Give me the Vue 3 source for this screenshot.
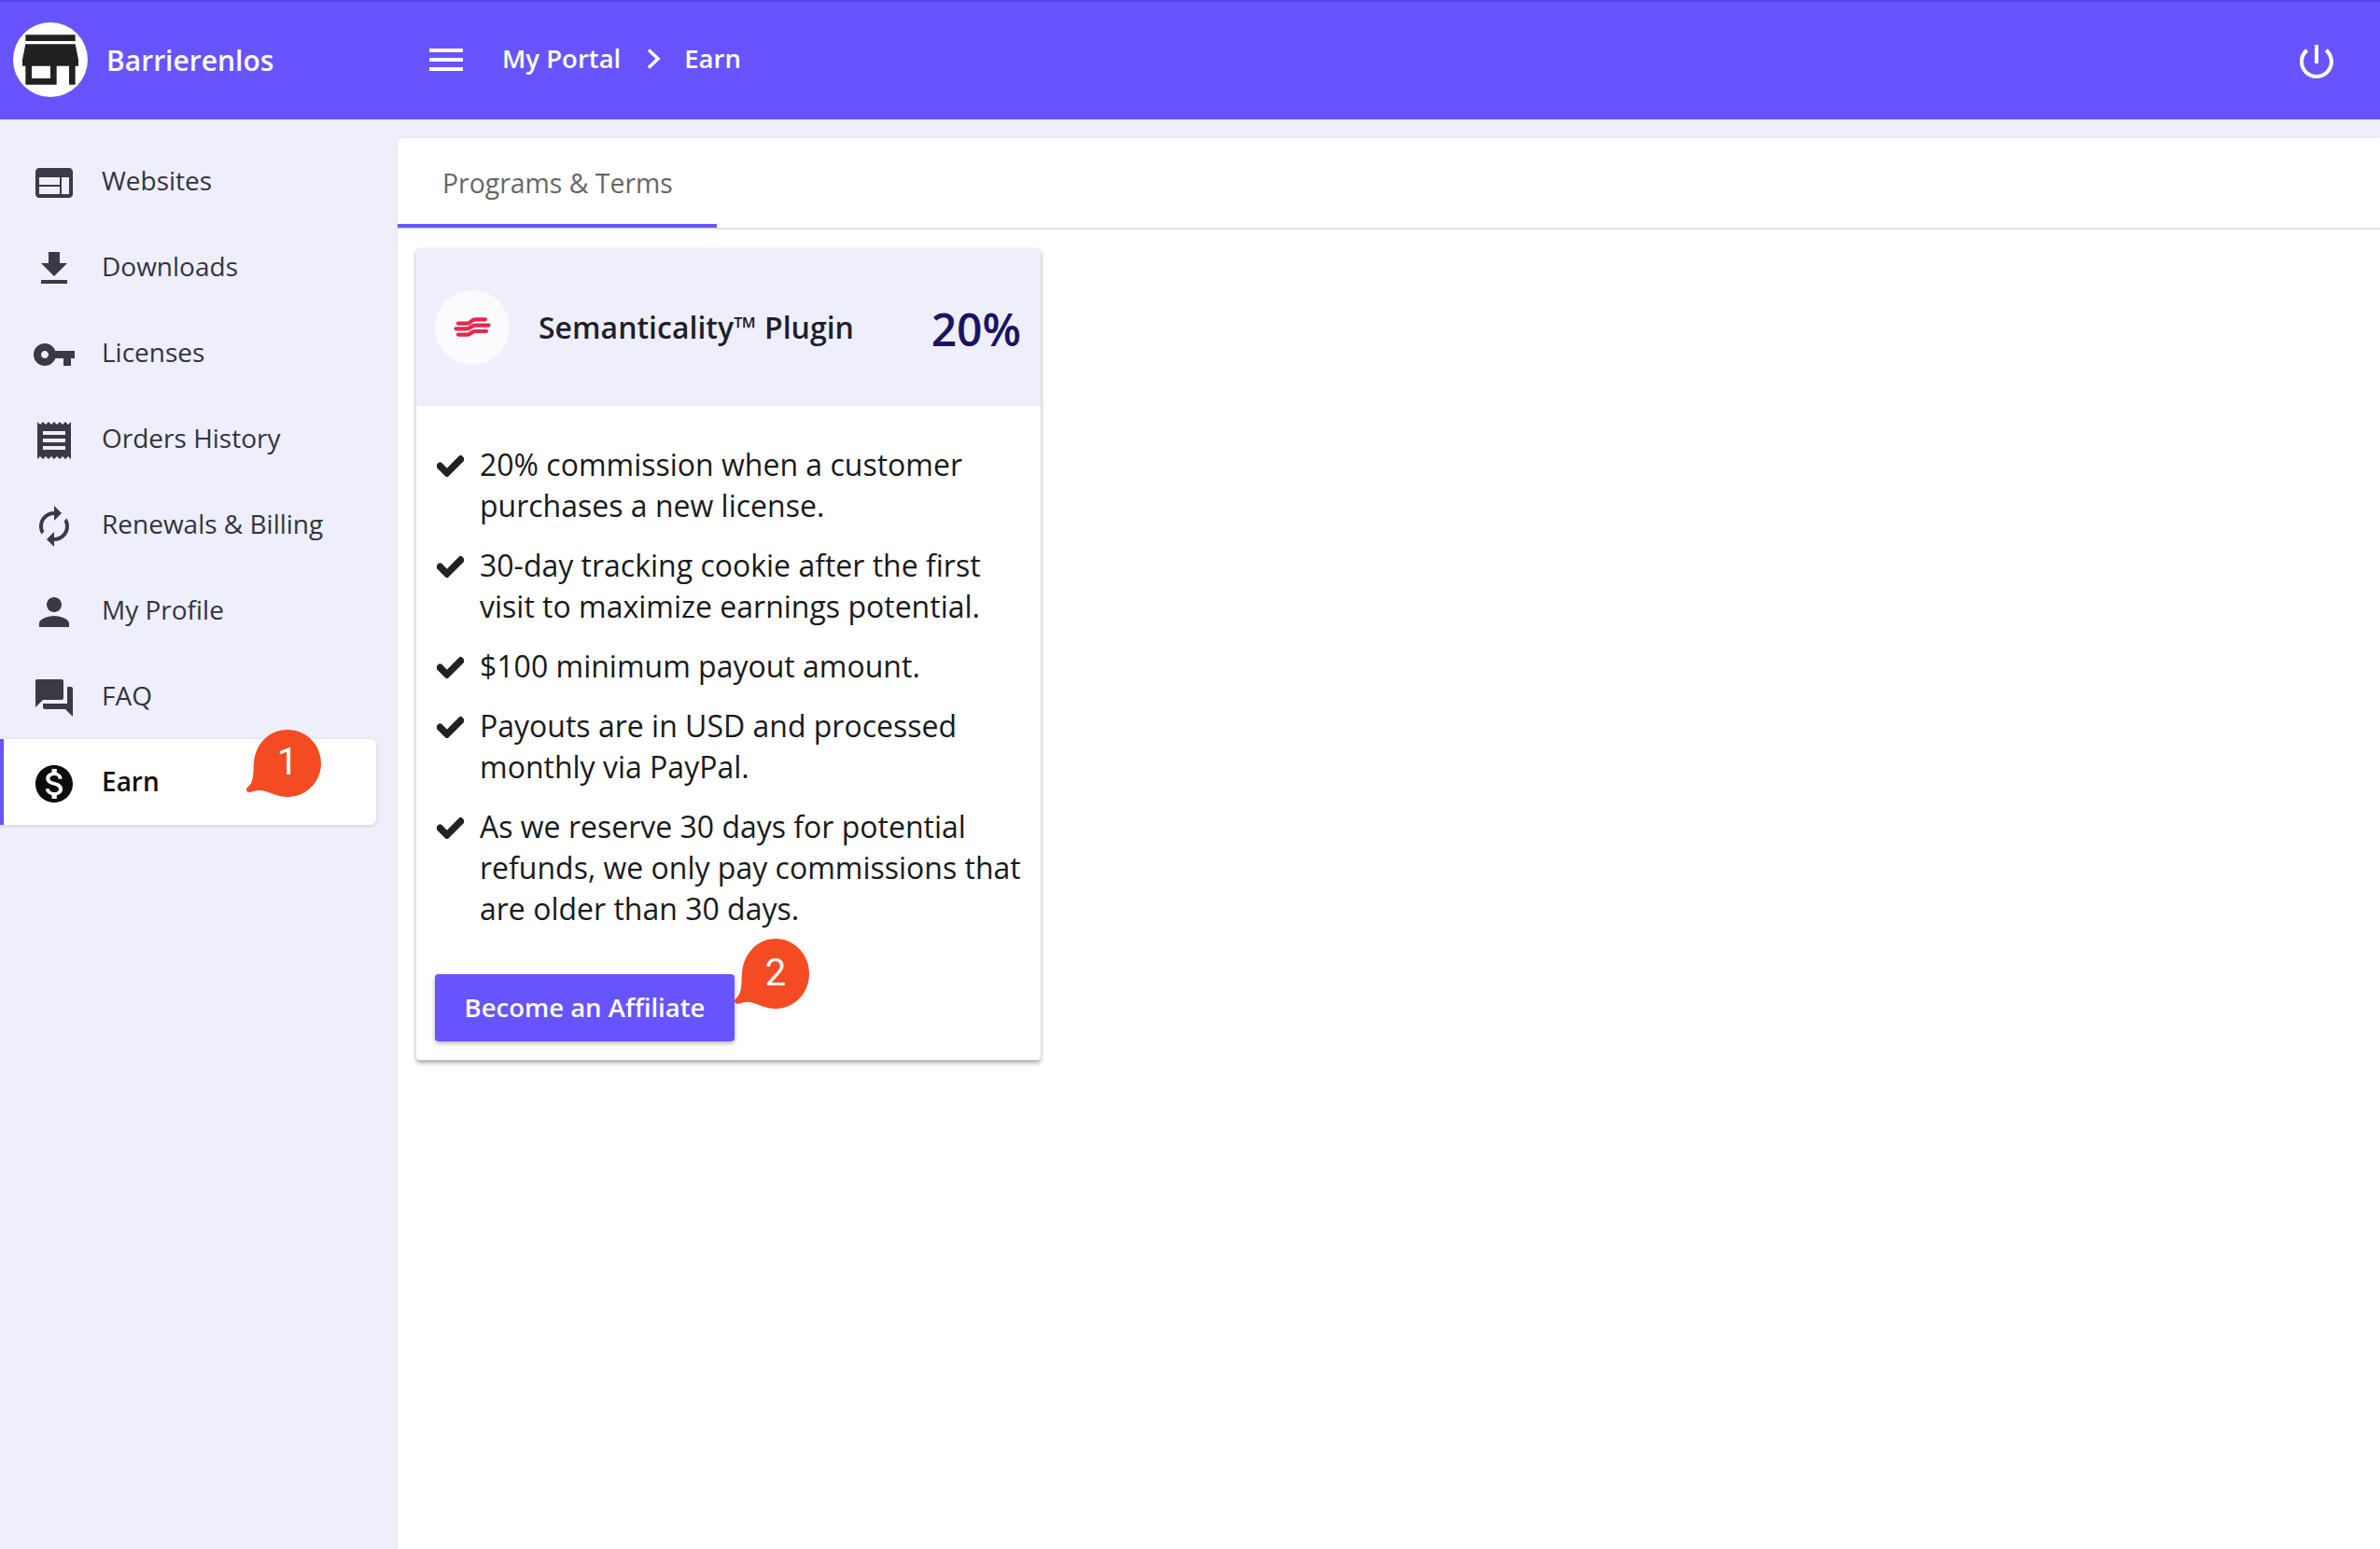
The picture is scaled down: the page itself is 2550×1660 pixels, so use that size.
<template>
  <div class="page">
    <header class="topbar">
      <div class="brand">
        <span class="brand-logo">
          <svg viewBox="0 0 24 24"><path :d="icons.store" /></svg>
        </span>
        <span class="brand-name">Barrierenlos</span>
      </div>
      <svg class="menu-icon" viewBox="0 0 24 24"><path :d="icons.menu" /></svg>
      <span class="crumb">My Portal</span>
      <svg class="crumb-arrow" viewBox="0 0 16 24"><path d="M3 2.500l10 9.500-10 9.500" /></svg>
      <span class="crumb">Earn</span>
      <svg class="power-icon" viewBox="0 0 24 24"><path :d="icons.power" /></svg>
    </header>

    <div class="body">
      <nav class="sidebar">
        <a
          v-for="item in menu"
          :key="item.label"
          class="nav-item"
          :class="{ active: item.active }"
        >
          <svg class="nav-icon" viewBox="0 0 24 24"><path :d="icons[item.icon]" /></svg>
          <span class="nav-label">{{ item.label }}</span>
          <span v-if="item.active" class="bubble bubble-nav">
            <svg viewBox="0 0 84 74" preserveAspectRatio="none"><path :d="bubblePath" /></svg>
            <b>1</b>
          </span>
        </a>
      </nav>

      <main class="content">
        <div class="tabs">
          <div class="tab">Programs &amp; Terms</div>
        </div>

        <section class="card">
          <div class="card-head">
            <span class="plugin-logo">
              <svg viewBox="0 0 40 22">
                <path d="M5 6.700H15C18 6.700 19 2.300 23 2.300H34" />
                <path d="M2.500 12.300H15C18 12.300 19 8.700 23 8.700H37.500" />
                <path d="M5 18.600H15C18 18.600 19 15 23 15H35" />
              </svg>
            </span>
            <h2>Semanticality™ Plugin</h2>
            <span class="percent">20%</span>
          </div>
          <ul class="terms">
            <li v-for="term in terms" :key="term">
              <svg viewBox="0 0 512 512"><path :d="icons.check" /></svg>
              <span>{{ term }}</span>
            </li>
          </ul>
          <div class="card-foot">
            <button class="cta">Become an Affiliate</button>
            <span class="bubble bubble-cta">
              <svg viewBox="0 0 84 74" preserveAspectRatio="none"><path :d="bubblePath" /></svg>
              <b>2</b>
            </span>
          </div>
        </section>
      </main>
    </div>
  </div>
</template>

<script setup>
const icons = {
  store: 'M20 4H4v2h16V4zm1 10v-2l-1-5H4l-1 5v2h1v6h10v-6h4v6h2v-6h1zm-9 4H6v-4h6v4z',
  menu: 'M3 18h18v-2H3v2zm0-5h18v-2H3v2zm0-7v2h18V6H3z',
  power: 'M13 3h-2v10h2V3zm4.83 2.17l-1.42 1.42C17.99 7.86 19 9.81 19 12c0 3.87-3.13 7-7 7s-7-3.13-7-7c0-2.19 1.01-4.14 2.58-5.42L6.17 5.17C4.23 6.82 3 9.26 3 12c0 4.97 4.03 9 9 9s9-4.03 9-9c0-2.74-1.23-5.18-3.17-6.83z',
  web: 'M20 4H4c-1.1 0-1.99.9-1.99 2L2 18c0 1.1.9 2 2 2h16c1.1 0 2-.9 2-2V6c0-1.1-.9-2-2-2zm-5 14H4v-4h11v4zm0-5H4V9h11v4zm5 5h-4V9h4v9z',
  download: 'M19 9h-4V3H9v6H5l7 7 7-7zM5 18v2h14v-2H5z',
  key: 'M12.65 10C11.83 7.67 9.61 6 7 6c-3.31 0-6 2.69-6 6s2.69 6 6 6c2.61 0 4.83-1.67 5.65-4H17v4h4v-4h2v-4H12.65zM7 14c-1.1 0-2-.9-2-2s.9-2 2-2 2 .9 2 2-.9 2-2 2z',
  receipt: 'M18 17H6v-2h12v2zm0-4H6v-2h12v2zm0-4H6V7h12v2zM3 22l1.5-1.5L6 22l1.5-1.5L9 22l1.5-1.5L12 22l1.5-1.5L15 22l1.5-1.5L18 22l1.5-1.5L21 22V2l-1.5 1.5L18 2l-1.5 1.5L15 2l-1.5 1.5L12 2l-1.5 1.5L9 2 7.5 3.5 6 2 4.5 3.5 3 2v20z',
  renew: 'M12 6v3l4-4-4-4v3c-4.42 0-8 3.58-8 8 0 1.57.46 3.03 1.24 4.26L6.7 14.8c-.45-.83-.7-1.79-.7-2.8 0-3.31 2.69-6 6-6zm6.76 1.74L17.3 9.2c.44.84.7 1.79.7 2.8 0 3.31-2.69 6-6 6v-3l-4 4 4 4v-3c4.42 0 8-3.58 8-8 0-1.57-.46-3.03-1.24-4.26z',
  person: 'M12 12c2.21 0 4-1.79 4-4s-1.79-4-4-4-4 1.79-4 4 1.79 4 4 4zm0 2c-2.67 0-8 1.34-8 4v2h16v-2c0-2.66-5.33-4-8-4z',
  forum: 'M21 6h-2v9H6v2c0 .55.45 1 1 1h11l4 4V7c0-.55-.45-1-1-1zm-4 6V3c0-.55-.45-1-1-1H3c-.55 0-1 .45-1 1v14l4-4h10c.55 0 1-.45 1-1z',
  money: 'M12 2C6.48 2 2 6.48 2 12s4.48 10 10 10 10-4.48 10-10S17.52 2 12 2zm1.41 16.09V20h-2.67v-1.93c-1.71-.36-3.16-1.46-3.27-3.4h1.96c.1 1.05.82 1.87 2.65 1.87 1.96 0 2.4-.98 2.4-1.59 0-.83-.44-1.61-2.67-2.14-2.48-.6-4.18-1.62-4.18-3.67 0-1.72 1.39-2.84 3.11-3.21V4h2.67v1.95c1.86.45 2.79 1.86 2.87 3.39H14.3c-.05-1.11-.64-1.87-2.22-1.87-1.5 0-2.4.68-2.4 1.64 0 .84.65 1.39 2.67 1.91s4.18 1.39 4.18 3.91c-.01 1.83-1.38 2.83-3.12 3.16z',
  check: 'M173.898 439.404l-166.4-166.4c-9.997-9.997-9.997-26.206 0-36.204l36.203-36.204c9.997-9.998 26.207-9.998 36.204 0L192 312.69 432.095 72.596c9.997-9.997 26.207-9.997 36.204 0l36.203 36.204c9.997 9.997 9.997 26.206 0 36.204l-294.4 294.401c-9.998 9.997-26.207 9.997-36.204-.001z'
}

// speech bubble with its tail pointing down-left
const bubblePath = 'M46 1c20 0 36 16 36 36S66 73 46 73c-12 0-22-7-30-7-5 0-8 2-11 2-3 0-4-3-2-5 7-6 6-12 7-26C11 17 26 1 46 1z'

const menu = [
  { label: 'Websites', icon: 'web' },
  { label: 'Downloads', icon: 'download' },
  { label: 'Licenses', icon: 'key' },
  { label: 'Orders History', icon: 'receipt' },
  { label: 'Renewals & Billing', icon: 'renew' },
  { label: 'My Profile', icon: 'person' },
  { label: 'FAQ', icon: 'forum' },
  { label: 'Earn', icon: 'money', active: true }
]

const terms = [
  '20% commission when a customer purchases a new license.',
  '30-day tracking cookie after the first visit to maximize earnings potential.',
  '$100 minimum payout amount.',
  'Payouts are in USD and processed monthly via PayPal.',
  'As we reserve 30 days for potential refunds, we only pay commissions that are older than 30 days.'
]
</script>

<style>
body {
  background: #eeeffa;
}
</style>

<style scoped>
.page {
  min-height: 1660px;
  display: flex;
  flex-direction: column;
  font-family: "Open Sans", "Noto Sans", sans-serif;
  background: #eeeffa;
}

.topbar {
  height: 128px;
  box-sizing: border-box;
  border-top: 2px solid #5540e0;
  background: #6655ff;
  color: #fff;
  display: flex;
  align-items: center;
  padding: 0 44px 2px 14px;
}

.brand {
  width: 440px;
  display: flex;
  align-items: center;
  gap: 20px;
  flex-shrink: 0;
}

.brand-logo {
  width: 80px;
  height: 80px;
  border-radius: 50%;
  background: #fff;
  display: block;
}

.brand-logo svg {
  display: block;
  width: 80px;
  height: 80px;
  fill: #212121;
}

.brand-name {
  font-size: 30px;
  font-weight: 600;
}

.menu-icon {
  width: 48px;
  height: 48px;
  fill: #fff;
  margin-right: 36px;
}

.crumb {
  font-size: 27.500px;
  font-weight: 600;
  margin-bottom: 3px;
}

.crumb-arrow {
  width: 16px;
  height: 24px;
  margin: 0 25px 2px 27px;
  fill: none;
  stroke: #fff;
  stroke-width: 3.500;
}

.power-icon {
  width: 48px;
  height: 48px;
  fill: #fff;
  margin-left: auto;
  margin-top: 4px;
}

.body {
  flex: 1;
  display: flex;
}

.sidebar {
  width: 426px;
  box-sizing: border-box;
  padding: 20px 23px 0 0;
  flex-shrink: 0;
}

.nav-item {
  position: relative;
  height: 92px;
  display: flex;
  align-items: center;
  gap: 27px;
  padding-left: 34px;
  box-sizing: border-box;
  font-size: 28px;
  color: #33333f;
}

.nav-label {
  padding-bottom: 3px;
}

.nav-icon {
  width: 48px;
  height: 48px;
  fill: #3a3a46;
  flex-shrink: 0;
  margin-top: 4px;
}

.nav-item.active {
  background: #fff;
  border-left: 4px solid #6655ff;
  padding-left: 30px;
  border-radius: 0 6px 6px 0;
  box-shadow: 0 1px 4px rgba(0, 0, 0, 0.15);
  color: #0c0c0c;
  font-weight: 600;
}

.nav-item.active .nav-icon {
  fill: #0c0c0c;
}

.bubble {
  position: absolute;
  width: 84px;
  height: 74px;
}

.bubble svg {
  display: block;
  width: 100%;
  height: 100%;
  fill: #f44b23;
}

.bubble b {
  position: absolute;
  left: 8px;
  right: 0;
  top: 0;
  line-height: 72px;
  text-align: center;
  color: #fff;
  font-family: Roboto, sans-serif;
  font-size: 40px;
  font-weight: 400;
}

.bubble-nav {
  left: 258px;
  top: -11px;
}

.bubble-cta {
  left: 339px;
  top: -11px;
  height: 77px;
}

.bubble-cta b {
  line-height: 76px;
}

.content {
  flex: 1;
  margin-top: 20px;
  background: #fff;
  border-radius: 6px 0 0 0;
  box-shadow: 0 0 3px rgba(0, 0, 0, 0.1);
}

.tabs {
  height: 98px;
  box-sizing: border-box;
  border-bottom: 2px solid #e2e2e2;
}

.tab {
  width: 342px;
  height: 96px;
  box-sizing: border-box;
  border-bottom: 4px solid #6655ff;
  padding-left: 48px;
  line-height: 97px;
  font-size: 28.400px;
  color: #666;
}

.card {
  width: 669px;
  margin: 20px 0 0 20px;
  border-radius: 4px;
  background: #fff;
  box-shadow: 0 3px 5px rgba(0, 0, 0, 0.35);
  padding-bottom: 20px;
}

.card-head {
  height: 169px;
  box-sizing: border-box;
  background: #eeeffa;
  border-radius: 4px 4px 0 0;
  display: flex;
  align-items: center;
  padding: 0 21px 0 20px;
}

.plugin-logo {
  width: 80px;
  height: 80px;
  border-radius: 50%;
  background: #fbfbfe;
  display: flex;
  align-items: center;
  justify-content: center;
  flex-shrink: 0;
  margin-right: 31px;
}

.plugin-logo svg {
  width: 40px;
  height: 22px;
  overflow: visible;
  fill: none;
  stroke: #e22a4d;
  stroke-width: 4.200;
  stroke-linecap: round;
}

.card-head h2 {
  margin: 0;
  font-size: 32px;
  font-weight: 600;
  color: #1f1f2b;
}

.percent {
  margin-left: auto;
  padding-top: 3px;
  font-size: 48px;
  font-weight: 600;
  color: #1a1464;
}

.terms {
  list-style: none;
  margin: 0;
  padding: 41px 20px 0 22px;
}

.terms li {
  display: flex;
  gap: 17px;
  margin-bottom: 20px;
  font-size: 32px;
  line-height: 44px;
  color: #1a1a1a;
}

.terms svg {
  width: 29px;
  height: 29px;
  flex-shrink: 0;
  margin-top: 9px;
  fill: #222;
  stroke: #222;
  stroke-width: 28;
}

.card-foot {
  position: relative;
  padding: 28px 0 0 20px;
}

.cta {
  display: block;
  width: 321px;
  height: 72px;
  padding: 0 0 2px;
  border: 0;
  border-radius: 4px;
  background: #6655ff;
  color: #fff;
  font-family: inherit;
  font-size: 27.500px;
  font-weight: 600;
  box-shadow: 0 2px 5px rgba(0, 0, 0, 0.3);
}
</style>
